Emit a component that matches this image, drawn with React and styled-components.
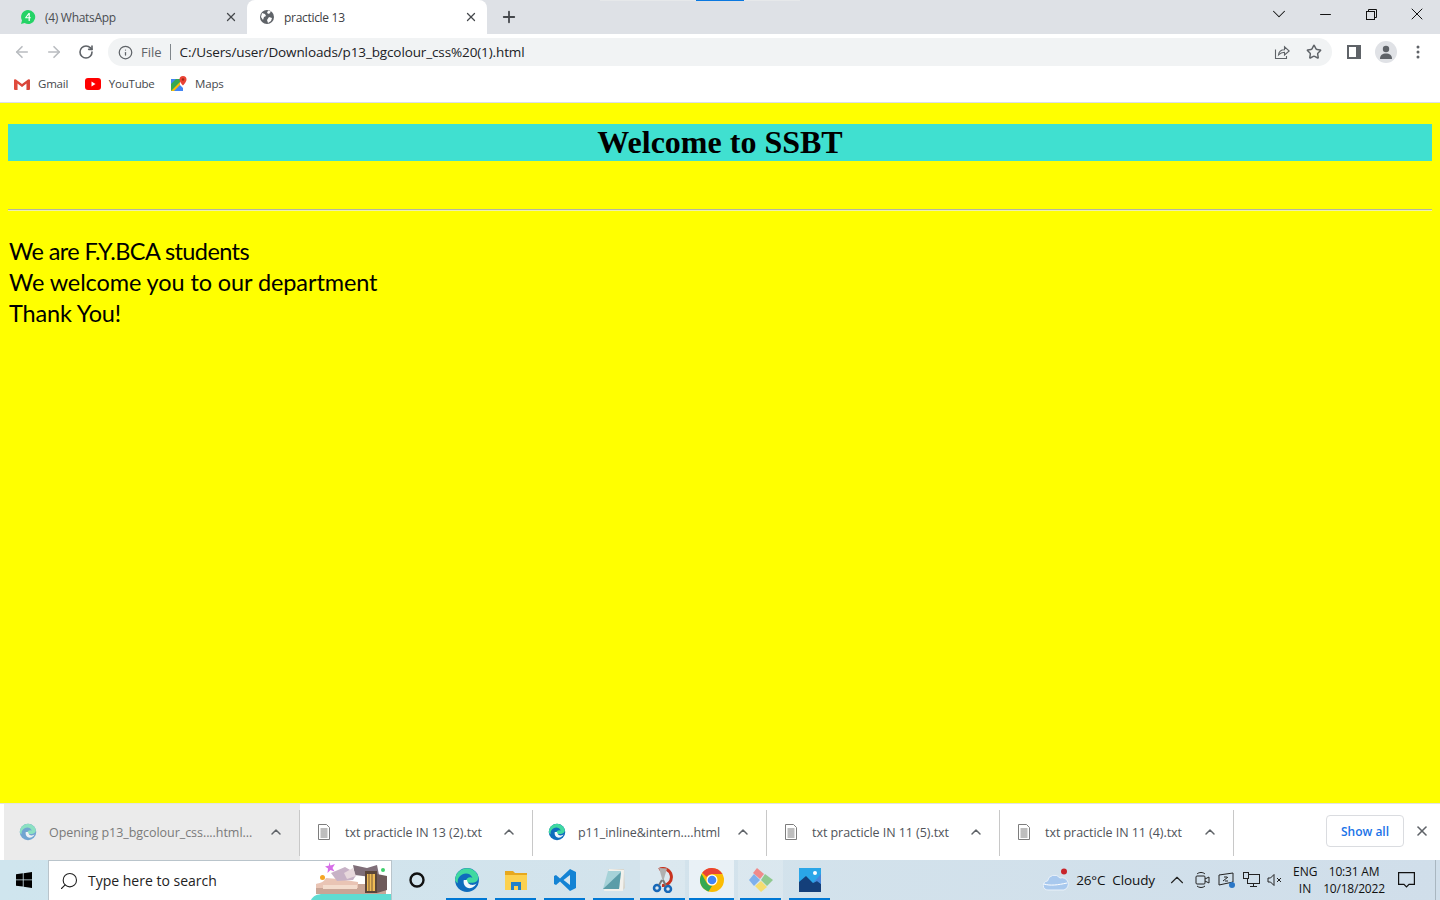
import React from "react";
import styled, { createGlobalStyle } from "styled-components";
import { X, ChevronDown, ChevronUp, Minus, Plus, ArrowLeft, ArrowRight, RotateCw, Info, Star, Search } from "lucide-react";

const Global = createGlobalStyle`
  html, body { margin: 0; padding: 0; height: 100%; overflow: hidden; }
  #root { height: 100%; }
  * { box-sizing: border-box; }
`;
const Shell = styled.div`
  width: 1440px; height: 900px; display: flex; flex-direction: column;
  font-family: "Open Sans", "Noto Sans", sans-serif; background: #fff; overflow: hidden;
`;
const TabStrip = styled.div`
  height: 34px; background: #dee1e6; display: flex; align-items: flex-end; padding-left: 8px; flex: none; position: relative;
`;
const TopGlow = styled.div`
  position: absolute; left: 600px; top: 0; width: 200px; height: 1px; background: #e6e8ea;
  &::after { content: ""; position: absolute; left: 96px; top: 0; width: 48px; height: 1px; background: #0a78e0; }
`;
const Tab = styled.div`
  width: ${p => p.$w}px; height: 34px; display: flex; align-items: center;
  padding: 0 9px 0 12px; gap: 9px; font-size: 12px; color: ${p => p.$active ? "#3c4043" : "#4a4d52"};
  background: ${p => p.$active ? "#fff" : "transparent"}; border-radius: 8px 8px 0 0; flex: none;
`;
const TabTitle = styled.span`flex: 1; white-space: nowrap; letter-spacing: -0.3px; padding-top: 1px;`;
const TabPlus = styled.div`width: 44px; display: flex; justify-content: center; align-items: center; height: 34px; color: #45484c;`;
const Spacer = styled.div`flex: 1;`;
const WinControls = styled.div`display: flex; align-items: center; height: 28px; align-self: flex-start; color: #111;`;
const WinBtn = styled.div`width: 46px; display: flex; justify-content: center; align-items: center;`;
const Toolbar = styled.div`height: 35px; display: flex; align-items: center; padding: 1px 0 0 6px; flex: none; background: #fff;`;
const NavBtn = styled.div`width: 32px; height: 32px; display: flex; align-items: center; justify-content: center; color: ${p => p.$dim ? "#b9bcc0" : "#5f6368"};`;
const Omnibox = styled.div`
  margin-left: 6px; width: 1224px; height: 28px; background: #f1f3f4; border-radius: 14px; display: flex; align-items: center;
  padding: 0 10px 0 10px; font-size: 13.5px; color: #202124; flex: none;
`;
const Chip = styled.span`color: #5f6368; margin-left: 8px; padding-right: 8px; border-right: 1px solid #80868b; line-height: 16px; font-size: 13px;`;
const Url = styled.span`margin-left: 9px; flex: 1; letter-spacing: -0.12px; white-space: nowrap;`;
const OmniIcons = styled.div`display: flex; gap: 16px; color: #5f6368; align-items: center;`;
const ToolIcons = styled.div`display: flex; align-items: center; margin-left: 6px; color: #5f6368;`;
const ToolBtn = styled.div`width: 32px; display: flex; align-items: center; justify-content: center;`;
const Avatar = styled.div`width: 22px; height: 22px; border-radius: 50%; background: #e0e2e6; display: flex; align-items: center; justify-content: center;`;
const Bookmarks = styled.div`height: 34px; display: flex; align-items: center; padding: 0 0 4px 14px; gap: 16.5px; flex: none; border-bottom: 1px solid #dcdfe8; background: #fff;`;
const Bookmark = styled.div`display: flex; align-items: center; gap: 8px; font-size: 11.5px; color: #45484c; letter-spacing: -0.2px;`;
const Page = styled.main`
  flex: 1; min-height: 0; background: #ff0; padding: 21px 8px 0; color: #000;
`;
const Heading = styled.h1`
  margin: 0; height: 37px; background: #40e0d0; text-align: center;
  font: bold 32px/37px "Liberation Serif", serif;
`;
const Rule = styled.hr`margin: 48px 0 0; height: 2px; border: 0; border-top: 1px solid #b4b4a0; border-bottom: 1px solid #eeeeb0;`;
const Para = styled.p`margin: 25px 0 0 1px; font: 23.5px/31px "Lato", "Carlito", sans-serif;`;
const ParaLine = styled.span`display: block; letter-spacing: ${p => p.$ls}px;`;
const DownloadBar = styled.div`height: 56px; background: #fff; display: flex; align-items: stretch; flex: none; box-shadow: 0 -1px 0 #e3e3e3;`;
const DownloadItem = styled.div`
  width: ${p => p.$w}px; margin-left: ${p => p.$ml || 0}px; display: flex; align-items: center; padding: 0 16px 0 ${p => p.$pl || 15}px; gap: ${p => p.$gap}px; flex: none;
  background: ${p => p.$busy ? "#ebebeb" : "#fff"}; position: relative; font-size: 12.5px; letter-spacing: -0.05px;
  color: ${p => p.$busy ? "#7a7a7a" : "#50535a"};
  &::after { content: ""; position: absolute; right: 0; top: 6px; bottom: 4px; width: 1px; background: #c8c8c8; }
`;
const DownloadName = styled.span`flex: 1; white-space: nowrap;`;
const ShowAll = styled.div`
  width: 78px; height: 32px; border: 1px solid #dadce0; border-radius: 4px; color: #1a73e8; font-size: 12px; font-weight: 600;
  display: flex; align-items: center; justify-content: center; margin-top: 11px;
`;
const CloseBar = styled.div`width: 36px; display: flex; align-items: center; justify-content: center; color: #5f6368; margin-top: -2px;`;
const Taskbar = styled.footer`
  height: 40px; flex: none; display: flex; align-items: stretch; background: linear-gradient(90deg, #cfe5ee 0%, #d3e3ec 45%, #d0deea 100%); color: #111;
`;
const StartBtn = styled.div`width: 48px; display: flex; align-items: center; justify-content: center;`;
const SearchBox = styled.div`
  width: 344px; background: #fff; border: 1px solid #b9c4cb; border-bottom: 0; display: flex; align-items: center; padding-left: 10px; gap: 9px;
  font-size: 14px; color: #222; position: relative; overflow: hidden;
`;
const SearchGlyph = styled(Search)`transform: scaleX(-1);`;
const SearchArt = styled.svg`position: absolute; right: 0; top: 0;`;
const OrangeDot = styled.i`position: absolute; right: 66px; top: 14px; width: 5px; height: 5px; border-radius: 50%; background: #f5a623;`;
const CortanaBtn = styled.div`width: 50px; display: flex; align-items: center; justify-content: center;`;
const TaskApp = styled.div`
  width: 45px; margin: 0 2px; display: flex; align-items: center; justify-content: center; position: relative;
  background: ${p => p.$focus ? "rgba(255,255,255,.5)" : p.$open ? "rgba(255,255,255,.18)" : "transparent"};
  &::after { content: ""; position: absolute; left: ${p => p.$tile ? 0 : 2}px; right: ${p => p.$tile ? 0 : 2}px; bottom: 0; height: 2px; background: #0078d4; }
`;
const Tray = styled.div`margin-left: auto; display: flex; align-items: center; height: 100%; font-size: 13.5px;`;
const Weather = styled.div`display: flex; align-items: center; gap: 7px; white-space: pre; letter-spacing: -0.1px;`;
const TrayIcons = styled.div`display: flex; align-items: center; gap: 7px; margin-left: 11px; color: #222;`;
const Lang = styled.div`font-size: 12px; line-height: 17px; text-align: center; margin-left: 11px; width: 24px;`;
const Clock = styled.div`font-size: 12px; line-height: 17px; text-align: center; margin-left: 6px; letter-spacing: -0.2px; margin-top: -1px; width: 62px;`;
const Notify = styled.div`width: 50px; padding-right: 8px; display: flex; align-items: center; justify-content: center;`;
const ShowDesktop = styled.div`width: 5px; height: 100%; border-left: 1px solid #a9b6c0;`;

const Globe = () => (
  <svg width="16" height="16" viewBox="0 0 16 16"><circle cx="8" cy="8" r="7" fill="#5f6368"/><path d="M3 4l3 1 1 2-2 1-1 3-2-3zM9 1.500l3 1-2 2.500-2-1zM10 8l3 1-1 3-3 2-1-3z" fill="#fff"/></svg>
);
const WhatsApp = () => (
  <svg width="16" height="16" viewBox="0 0 16 16"><path d="M8 1a7 7 0 0 0-6 10.500L1 15l3.600-1A7 7 0 1 0 8 1z" fill="#25d366"/><path d="M8.600 4h1.200v4.300h1v1h-1V12H8.600V9.300H5.200V8.400zM8.600 5.800 6.500 8.300h2.100z" fill="#fff"/></svg>
);
const Gmail = () => (
  <svg width="16" height="12" viewBox="0 0 16 12"><path d="M1 12V2l7 5 7-5v10h-2.500V5.500L8 9 3.500 5.500V12z" fill="#e8e2e0"/><path d="M0 2v9a1 1 0 0 0 1 1h2.500V5.500L8 9V6L2 1.500A1.200 1.200 0 0 0 0 2z" fill="#e04a3c"/><path d="M16 2v9a1 1 0 0 1-1 1h-2.500V5.500L8 9V6l6-4.500A1.200 1.200 0 0 1 16 2z" fill="#d8453a"/></svg>
);
const YouTube = () => (
  <svg width="16" height="12" viewBox="0 0 16 12"><rect width="16" height="12" rx="3" fill="#f00"/><path d="M6.500 3.500v5l4-2.500z" fill="#fff"/></svg>
);
const Maps = () => (
  <svg width="16" height="16" viewBox="0 0 16 16"><path d="M0 3h9v12H0z" fill="#35a853"/><path d="M0 15 9 6v9z" fill="#fbbc04"/><path d="M3 15 9 9l3 3v3z" fill="#4285f4"/><path d="M0 3h5L0 8z" fill="#4285f4"/><path d="M12 0a3.500 3.500 0 0 0-3.500 3.500C8.500 6 12 9.500 12 9.500s3.500-3.500 3.500-6A3.500 3.500 0 0 0 12 0z" fill="#ea4335"/><circle cx="12" cy="3.500" r="1.200" fill="#a52714"/></svg>
);
const ShareBox = () => (
  <svg width="16" height="16" viewBox="0 0 16 16" fill="none" stroke="#5f6368" strokeWidth="1.100"><path d="M1.500 5.500v9h11V12"/><path d="M4.500 11c.3-3.300 2.700-5.300 6-5.300V2.800L15.200 7l-4.700 4V8.300C8 8.300 6 9.300 4.500 11z"/></svg>
);
const SidePanel = () => (
  <svg width="14" height="14" viewBox="0 0 14 14"><rect width="14" height="14" fill="#5f6368"/><rect x="2" y="2" width="7" height="10" fill="#fff"/></svg>
);
const Person = () => (
  <svg width="14" height="14" viewBox="0 0 14 14"><circle cx="7" cy="4" r="3.200" fill="#5f6368"/><path d="M1 14c0-4 2.500-5.500 6-5.500s6 1.500 6 5.500z" fill="#5f6368"/></svg>
);
const Kebab = () => (
  <svg width="4" height="14" viewBox="0 0 4 14" fill="#5f6368"><circle cx="2" cy="2" r="1.500"/><circle cx="2" cy="7" r="1.500"/><circle cx="2" cy="12" r="1.500"/></svg>
);
const Restore = () => (
  <svg width="11" height="11" viewBox="0 0 11 11" fill="none" stroke="#111"><rect x=".5" y="2.500" width="8" height="8"/><path d="M2.500 2.500V.5h8v8h-2"/></svg>
);
const EdgeIcon = ({ size = 18, faded }) => (
  <svg width={size} height={size} viewBox="0 0 24 24" opacity={faded ? 0.55 : 1}>
    <circle cx="12" cy="12" r="11" fill="#0f6cbd"/>
    <path d="M1 12a11 11 0 0 1 21-4.500c1.500 4-1 7-4.500 7H11c-.5-3 1.500-5 4-5 1 0 1.500.3 2 .6C15.500 6 11 5 7.500 7 4 9 3 12 3.500 15 2 14 1 13 1 12z" fill="#40d9a0"/>
    <path d="M9 12c-1 5 3 9 8 7a10 10 0 0 0 4-4c-2 2-8 3-9-3z" fill="#fff" opacity=".95"/>
  </svg>
);
const TxtIcon = () => (
  <svg width="14" height="16" viewBox="0 0 14 16" fill="#fff" stroke="#7d7d7d"><path d="M1.500.5h8l3 3v12h-11z"/><path d="M3.500 5h7M3.500 7h7M3.500 9h7M3.500 11h7M3.500 13h7" fill="none"/></svg>
);
const WinLogo = () => (
  <svg width="16" height="16" viewBox="0 0 16 16" fill="#000"><path d="M0 2.300 6.800 1.300v6.200H0zM7.600 1.200 16 0v7.500H7.600zM0 8.300h6.800v6.300L0 13.700zM7.600 8.300H16V16l-8.400-1.200z"/></svg>
);
const Building = () => (
  <SearchArt width="80" height="39" viewBox="0 0 80 39">
    <path d="M0 39c2-4 6-6 12-6h68v6z" fill="#5fdcd2"/>
    <path d="M5 32V23h70v10H5z" fill="#c8a596"/>
    <path d="M5 23c4-1 8-2 10-6l12 1 20 3v6H5z" fill="#e9c4b4"/>
    <path d="M12 24h34v4H12z" fill="#f3dccd"/>
    <path d="M20 12l14-6 12 7-4 6-16 1z" fill="#c7b2c6"/>
    <path d="M42 4l14 3 10-3 2 10-8 2-16-2z" fill="#7f6e78"/>
    <path d="M54 10h12v22H54z" fill="#5a4538"/>
    <path d="M56 13h8v17h-8z" fill="#f0bc55"/>
    <path d="M58 13v17M61 13v17" stroke="#7a5a38"/>
    <path d="M66 13l10 2v14l-10 3z" fill="#6f5a5a"/>
    <path d="M33 12l9-5 3 8-9 3z" fill="#e7d8dc"/>
    <path d="M18 1l1.500 3.500L24 3l-2.500 4 2 3.500-4-1.500-3 3 .5-4.500-3-2 4-1z" fill="#d66ee8"/>
    <circle cx="72" cy="9" r="2" fill="#3ecf6b"/>
  </SearchArt>
);
const VSCode = () => (
  <svg width="24" height="24" viewBox="0 0 24 24"><path d="M17 1 23 4v16l-6 3L7 13.500 3 17l-2-1v-8l2-1 4 3.500z" fill="#1483d4"/><path d="M17 7v10l-6.500-5z" fill="#d6e6f0"/></svg>
);
const Folder = () => (
  <svg width="22" height="20" viewBox="0 0 22 20"><path d="M0 1h8l2 2h12v4H0z" fill="#e7a81e"/><path d="M0 5h22v15H0z" fill="#fcd14f"/><path d="M6 12h10v8h-3v-4H9v4H6z" fill="#1f80c9"/></svg>
);
const Notepad = () => (
  <svg width="26" height="24" viewBox="0 0 26 24"><path d="M7 1h16l1 19-3 3z" fill="#d6d4cb"/><path d="M8 1l15 1-1 21H3z" fill="#f2f1ec"/><path d="M7 3h13l-2 18H2z" fill="#a6d2d8"/><path d="M2 21 20 4l-2 17z" fill="#5b9da8"/></svg>
);
const Snip = () => (
  <svg width="26" height="26" viewBox="0 0 26 26" fill="none"><path d="M9 2.500a8.500 8.500 0 1 1 3 16" stroke="#c8331f" strokeWidth="3"/><path d="M9 1l4 14 4-13.500z" fill="#b0b0b0"/><circle cx="7" cy="21" r="3" stroke="#1768b8" strokeWidth="2.500"/><circle cx="18" cy="22" r="3" stroke="#1768b8" strokeWidth="2.500"/><path d="M9 18l3-5M16 19l-3-6" stroke="#777" strokeWidth="2"/></svg>
);
const Chrome = () => (
  <svg width="24" height="24" viewBox="0 0 24 24"><circle cx="12" cy="12" r="12" fill="#fbbc04"/><path d="M12 0a12 12 0 0 1 10.400 6H12a6 6 0 0 0-5.200 3L2.200 4.700A12 12 0 0 1 12 0z" fill="#ea4335"/><path d="M1.600 6 6.800 15a6 6 0 0 0 5.200 3L8.500 23.500A12 12 0 0 1 1.600 6z" fill="#34a853"/><circle cx="12" cy="12" r="5.500" fill="#fff"/><circle cx="12" cy="12" r="4.300" fill="#4285f4"/></svg>
);
const Gem = () => (
  <svg width="26" height="26" viewBox="0 0 26 26"><path d="M9 1l7 6-4 5-7-6z" fill="#f08a8a"/><path d="M1 13l5-6 6 6-6 6z" fill="#7fb0ec"/><path d="M17 7l8 6-6 6-6-6z" fill="#8fc98f"/><path d="M7 19l6-5 6 6-6 5z" fill="#f5dd70"/></svg>
);
const Photos = () => (
  <svg width="22" height="24" viewBox="0 0 22 24"><rect width="22" height="24" fill="#2aa6e8"/><path d="M0 24V14l7-6 7 7 4-2 4 3v8z" fill="#143f7a"/><path d="M14 15l4-2 4 3V6z" fill="#5a6fd0" opacity=".6"/><circle cx="16" cy="5" r="2" fill="#fff"/></svg>
);
const Cloud = () => (
  <svg width="26" height="24" viewBox="0 0 26 24"><path d="M5 22a4.500 4.500 0 0 1-.5-9A7 7 0 0 1 17 10a6 6 0 0 1 4 12z" fill="#a9c9ee" stroke="#e9f1fa" strokeWidth="1"/><path d="M1 16c6 2 14 1 23-1" stroke="#fff" fill="none"/><circle cx="21" cy="3.500" r="3" fill="#c8242a"/></svg>
);
const MeetIcon = () => (
  <svg width="16" height="18" viewBox="0 0 16 18" fill="none" stroke="#222"><rect x="1" y="5" width="9" height="8" rx="1"/><path d="M10 8l4-2v6l-4-2M2 3c2-2 6-2 8 0M2 15c2 2 6 2 8 0"/></svg>
);
const ScreenIcon = () => (
  <svg width="18" height="16" viewBox="0 0 18 16" fill="none" stroke="#222"><path d="M1 3l14-2v9l-14 3zM5 9l5-4M6 5h3M7 9h3"/><circle cx="14" cy="13" r="3" fill="#2a76c6" stroke="none"/></svg>
);
const NetIcon = () => (
  <svg width="17" height="17" viewBox="0 0 17 17" fill="none" stroke="#222"><rect x="4.500" y="2.500" width="12" height="9"/><rect x=".5" y=".5" width="5" height="6" fill="#d0deea"/><path d="M10.500 11.500v3M7 14.500h7"/></svg>
);
const MuteIcon = () => (
  <svg width="15" height="14" viewBox="0 0 15 14" fill="none" stroke="#222"><path d="M1 5v4h2.500L7 12.500v-11L3.500 5zM10 5l4 4M14 5l-4 4"/></svg>
);
const ActionCenter = () => (
  <svg width="17" height="16" viewBox="0 0 17 16" fill="none" stroke="#111" strokeWidth="1.200"><path d="M.6.6h15.800v11.800H11l-2.500 2.500L6 12.400H.6z"/></svg>
);

const downloads = [
  { name: "Opening p13_bgcolour_css....html...", w: 296, ml: 4, pl: 15, gap: 12, busy: true, icon: <EdgeIcon faded /> },
  { name: "txt practicle IN 13 (2).txt", w: 233, pl: 17, gap: 14, icon: <TxtIcon /> },
  { name: "p11_inline&intern....html", w: 234, pl: 15, gap: 12, icon: <EdgeIcon /> },
  { name: "txt practicle IN 11 (5).txt", w: 233, pl: 17, gap: 14, icon: <TxtIcon /> },
  { name: "txt practicle IN 11 (4).txt", w: 234, pl: 17, gap: 14, icon: <TxtIcon /> },
];
const apps = [
  { c: <EdgeIcon size={26} /> },
  { c: <Folder /> },
  { c: <VSCode /> },
  { c: <Notepad /> },
  { c: <Snip />, open: true, tile: true },
  { c: <Chrome />, focus: true, tile: true },
  { c: <Gem />, open: true },
  { c: <Photos /> },
];

export default function App() {
  return (
    <Shell>
      <Global />
      <TabStrip>
        <TopGlow />
        <Tab $w={239}>
          <WhatsApp />
          <TabTitle>(4) WhatsApp</TabTitle>
          <X size={14} strokeWidth={2.2} color="#45484c" />
        </Tab>
        <Tab $w={240} $active>
          <Globe />
          <TabTitle>practicle 13</TabTitle>
          <X size={14} strokeWidth={2.2} color="#45484c" />
        </Tab>
        <TabPlus><Plus size={18} strokeWidth={2.4} /></TabPlus>
        <Spacer />
        <WinControls>
          <WinBtn><ChevronDown size={22} strokeWidth={1.1} /></WinBtn>
          <WinBtn><Minus size={17} strokeWidth={1.4} /></WinBtn>
          <WinBtn><Restore /></WinBtn>
          <WinBtn><X size={20} strokeWidth={1.2} /></WinBtn>
        </WinControls>
      </TabStrip>
      <Toolbar>
        <NavBtn $dim><ArrowLeft size={18} strokeWidth={2.2} /></NavBtn>
        <NavBtn $dim><ArrowRight size={18} strokeWidth={2.2} /></NavBtn>
        <NavBtn><RotateCw size={16} strokeWidth={2.4} /></NavBtn>
        <Omnibox>
          <Info size={15} color="#5f6368" />
          <Chip>File</Chip>
          <Url>C:/Users/user/Downloads/p13_bgcolour_css%20(1).html</Url>
          <OmniIcons>
            <ShareBox />
            <Star size={16} strokeWidth={2.2} />
          </OmniIcons>
        </Omnibox>
        <ToolIcons>
          <ToolBtn><SidePanel /></ToolBtn>
          <ToolBtn><Avatar><Person /></Avatar></ToolBtn>
          <ToolBtn><Kebab /></ToolBtn>
        </ToolIcons>
      </Toolbar>
      <Bookmarks>
        <Bookmark><Gmail />Gmail</Bookmark>
        <Bookmark><YouTube />YouTube</Bookmark>
        <Bookmark><Maps />Maps</Bookmark>
      </Bookmarks>
      <Page>
        <Heading>Welcome to SSBT</Heading>
        <Rule />
        <Para>
          <ParaLine $ls={-0.58}>We are F.Y.BCA students</ParaLine>
          <ParaLine $ls={-0.1}>We welcome you to our department</ParaLine>
          <ParaLine $ls={-0.15}>Thank You!</ParaLine>
        </Para>
      </Page>
      <DownloadBar>
        {downloads.map(d => (
          <DownloadItem key={d.name} $w={d.w} $ml={d.ml} $pl={d.pl} $gap={d.gap} $busy={d.busy}>
            {d.icon}
            <DownloadName>{d.name}</DownloadName>
            <ChevronUp size={16} strokeWidth={2.2} color="#5f6368" />
          </DownloadItem>
        ))}
        <Spacer />
        <ShowAll>Show all</ShowAll>
        <CloseBar><X size={16} strokeWidth={2.4} /></CloseBar>
      </DownloadBar>
      <Taskbar>
        <StartBtn><WinLogo /></StartBtn>
        <SearchBox>
          <SearchGlyph size={20} strokeWidth={1.3} />
          Type here to search
          <Building />
          <OrangeDot />
        </SearchBox>
        <CortanaBtn>
          <svg width="16" height="16" viewBox="0 0 16 16" fill="none" stroke="#111" strokeWidth="2.400"><circle cx="8" cy="8" r="6.500" /></svg>
        </CortanaBtn>
        {apps.map((a, i) => (
          <TaskApp key={i} $tile={a.tile} $open={a.open} $focus={a.focus}>{a.c}</TaskApp>
        ))}
        <Tray>
          <Weather><Cloud />26°C  Cloudy</Weather>
          <TrayIcons>
            <ChevronUp size={22} strokeWidth={1.2} />
            <MeetIcon />
            <ScreenIcon />
            <NetIcon />
            <MuteIcon />
          </TrayIcons>
          <Lang>ENG<br />IN</Lang>
          <Clock>10:31 AM<br />10/18/2022</Clock>
          <Notify><ActionCenter /></Notify>
          <ShowDesktop />
        </Tray>
      </Taskbar>
    </Shell>
  );
}
